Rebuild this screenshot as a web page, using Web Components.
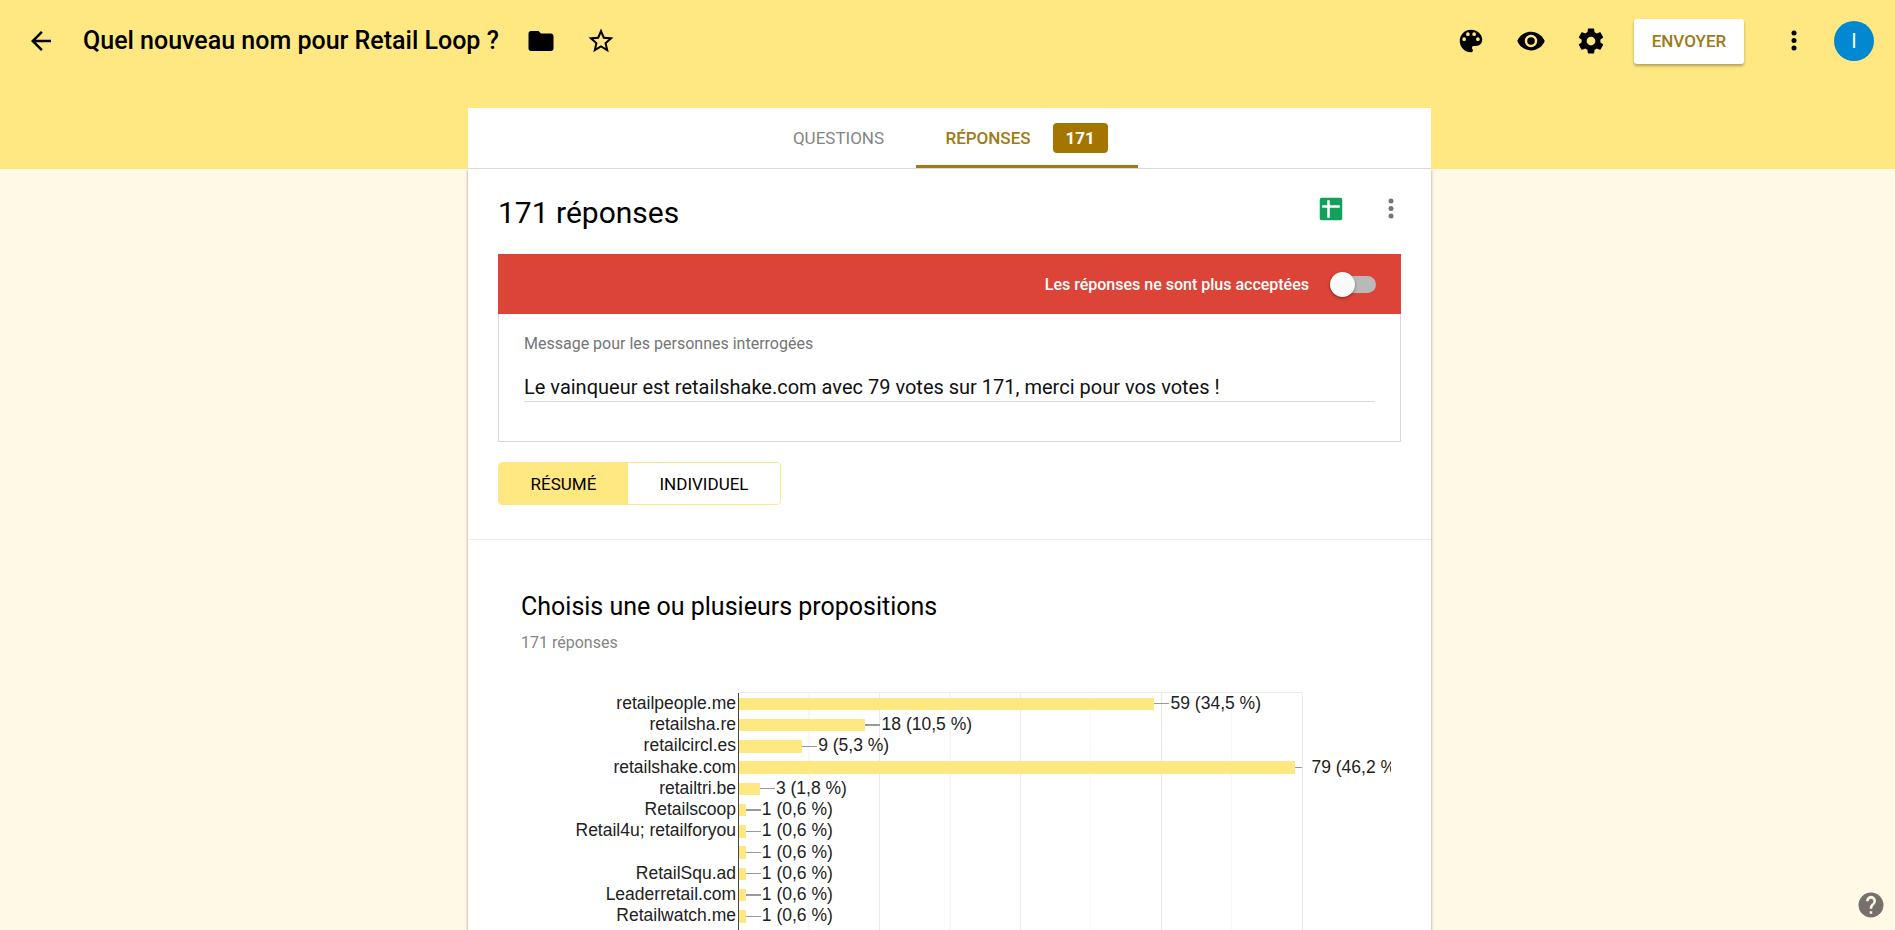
<!DOCTYPE html>
<html lang="fr">
<head>
<meta charset="utf-8">
<meta name="viewport" content="width=device-width, initial-scale=1">
<title>Quel nouveau nom pour Retail Loop ?</title>
<style>
  html, body { height: 100%; }
  body {
    margin: 0;
    font-family: Roboto, "Liberation Sans", sans-serif;
    color: #000;
    background: #fff9e5;
    --theme: #ffe782;
    --accent: #a47600;
    --accent-text: #a07a14;
    --line: #d9d9d9;
    --muted: #757575;
    --card-width: 963px;
  }
</style>
</head>
<body>
<forms-app></forms-app>

<template id="icon-button">
  <style>
    :host { display: block; flex: none; }
    button {
      display: grid; place-items: center; width: var(--button-size, 60px); height: var(--button-size, 60px);
      margin: 0; padding: 0; border: 0; background: none; color: inherit; cursor: pointer;
    }
    svg { display: block; width: 30px; height: 30px; fill: currentColor; }
  </style>
  <button type="button"><svg viewBox="0 0 24 24" aria-hidden="true"></svg></button>
</template>

<template id="top-bar">
  <style>
    :host { display: flex; align-items: center; height: 82px; padding: 0 21px 0 11px; box-sizing: border-box; }
    h1 { margin: 0 12px; font-size: 25px; line-height: 32px; font-weight: 500; white-space: nowrap; }
    .space { flex: 1; }
    .send {
      width: 110px; height: 45px; margin: 0 20px 0 13px; padding: 0; border: 0; border-radius: 3px;
      background: #fff; color: var(--accent-text); font: 500 17px/20px Roboto, sans-serif;
      box-shadow: 0 2px 3px rgba(0,0,0,.3); cursor: pointer;
    }
    .avatar {
      width: 40px; height: 40px; margin: 0 0 0 10px; padding: 0; border: 0; border-radius: 50%;
      background: #0288d1; color: #fff; font: 400 20px/40px Roboto, sans-serif; cursor: pointer;
    }
  </style>
  <icon-button icon="back" label="Retour"></icon-button>
  <h1>Quel nouveau nom pour Retail Loop ?</h1>
  <icon-button icon="folder" label="Dossier"></icon-button>
  <icon-button icon="star" label="Suivre"></icon-button>
  <span class="space"></span>
  <icon-button icon="palette" label="Palette"></icon-button>
  <icon-button icon="eye" label="Aperçu"></icon-button>
  <icon-button icon="gear" label="Paramètres"></icon-button>
  <button class="send" type="button">ENVOYER</button>
  <icon-button icon="more" label="Plus"></icon-button>
  <button class="avatar" type="button">I</button>
</template>

<template id="tab-strip">
  <style>
    :host {
      display: flex; justify-content: center; width: 100%; max-width: var(--card-width); height: 61px;
      box-sizing: border-box; background: #fff; border-bottom: 1px solid var(--line);
    }
    button {
      display: flex; align-items: center; justify-content: center; gap: 22px; min-width: 154px;
      margin: 0; padding: 3px 28px 0; border: 0; border-bottom: 3px solid transparent; background: none;
      color: #858585; font: 400 17px/20px Roboto, sans-serif; cursor: pointer;
    }
    button[aria-selected="true"] { min-width: 222px; color: var(--accent-text); border-color: var(--accent-text); font-weight: 500; }
    .count {
      width: 55px; border-radius: 4px; background: var(--accent); color: #fff;
      font-weight: 700; line-height: 30px;
    }
  </style>
  <button type="button" role="tab" aria-selected="false">QUESTIONS</button>
  <button type="button" role="tab" aria-selected="true">RÉPONSES<span class="count">171</span></button>
</template>

<template id="responses-panel">
  <style>
    :host { display: block; padding: 0 30px 34px; border-bottom: 1px solid #ebebeb; }
    header { display: flex; align-items: center; height: 85px; }
    h2 { flex: 1; margin: 0; padding-top: 2px; font-size: 30px; line-height: 36px; font-weight: 400; }
    .actions { display: flex; align-items: center; align-self: flex-start; height: 80px; margin-right: -20px; }
    .sheets { color: #12a05a; }
    .more { color: var(--muted); }
    .status {
      display: flex; align-items: center; justify-content: flex-end; gap: 21px; height: 60px;
      padding: 0 25px; background: #db4437; color: #fff; font-size: 16px; font-weight: 500;
    }
    .status input {
      appearance: none; display: flex; align-items: center; width: 46px; height: 17px; margin: 0;
      border-radius: 9px; background: linear-gradient(90deg, transparent 8px, #b9b9b9 8px); cursor: pointer;
    }
    .status input::before {
      content: ""; width: 25px; height: 25px; border-radius: 50%; background: #fafafa;
      box-shadow: 0 1px 3px rgba(0,0,0,.45);
    }
    .message { padding: 20px 25px 39px; border: 1px solid var(--line); border-top: 0; }
    .message label { display: block; color: var(--muted); font-size: 16px; line-height: 20px; }
    .message input {
      display: block; box-sizing: border-box; width: 100%; height: 30px; margin: 18px 0 0; padding: 0;
      border: 0; border-bottom: 1px solid var(--line); outline: 0; background: none; color: #111;
      font: 400 20px/28px Roboto, sans-serif;
    }
    .views { display: flex; width: 283px; height: 43px; margin-top: 20px; box-sizing: border-box; border: 1px solid var(--theme); border-radius: 4px; overflow: hidden; }
    .views button {
      flex: 1; margin: 0; padding: 0; border: 0; background: #fff; color: #000;
      font: 400 17px/20px Roboto, sans-serif; cursor: pointer;
    }
    .views button[aria-pressed="true"] { flex: 0 0 129px; background: var(--theme); }
  </style>
  <header>
    <h2>171 réponses</h2>
    <div class="actions">
      <icon-button class="sheets" icon="sheets" label="Créer une feuille de calcul"></icon-button>
      <icon-button class="more" icon="more" label="Plus"></icon-button>
    </div>
  </header>
  <div class="status">
    <label for="accepting">Les réponses ne sont plus acceptées</label>
    <input id="accepting" type="checkbox" role="switch">
  </div>
  <div class="message">
    <label for="message">Message pour les personnes interrogées</label>
    <input id="message" type="text" value="Le vainqueur est retailshake.com avec 79 votes sur 171, merci pour vos votes !">
  </div>
  <div class="views">
    <button type="button" aria-pressed="true">RÉSUMÉ</button>
    <button type="button" aria-pressed="false">INDIVIDUEL</button>
  </div>
</template>

<template id="question-summary">
  <style>
    :host { display: block; padding: 50px 40px 40px 53px; }
    h3 { margin: 0; font-size: 25px; line-height: 34px; font-weight: 400; }
    p { margin: 9px 0 27px; color: #858585; font-size: 16px; line-height: 20px; }
  </style>
  <h3><slot name="title"></slot></h3>
  <p><slot name="count"></slot></p>
  <slot></slot>
</template>

<template id="bar-chart">
  <style>
    :host { display: block; }
    svg { display: block; width: 100%; height: auto; overflow: hidden; }
    text { font: 14px "Liberation Sans", Arial, sans-serif; fill: #222; }
    .name { text-anchor: end; }
    rect, line { shape-rendering: crispEdges; }
    .bar { fill: var(--theme); }
    .major { stroke: #ebebeb; }
    .minor { stroke: #f7f7f7; }
    .axis { stroke: #444; }
    .stem { stroke: #999; }
  </style>
  <svg role="img" aria-label="Nombre de votes par proposition"></svg>
</template>

<template id="forms-app">
  <style>
    :host { display: flex; flex-direction: column; height: 100%; overflow: hidden; }
    .head { flex: none; background: var(--theme); }
    .tabs, main { display: flex; justify-content: center; align-items: flex-start; padding-left: 4px; }
    .tabs { padding-top: 26px; }
    main { flex: 1; min-height: 0; overflow-y: auto; scrollbar-width: none; }
    .card { width: 100%; max-width: var(--card-width); background: #fff; box-shadow: 0 1px 3px rgba(0,0,0,.4); }
    .help { --button-size: 30px; position: fixed; right: 9px; bottom: 10px; color: #75716a; }
  </style>
  <div class="head">
    <top-bar></top-bar>
    <div class="tabs"><tab-strip role="tablist"></tab-strip></div>
  </div>
  <main>
    <div class="card">
      <responses-panel></responses-panel>
      <question-summary>
        <span slot="title">Choisis une ou plusieurs propositions</span>
        <span slot="count">171 réponses</span>
        <bar-chart></bar-chart>
      </question-summary>
    </div>
  </main>
  <icon-button class="help" icon="help" label="Aide"></icon-button>
</template>

<script>
  const ICONS = {
    back: '<path d="M20 11H7.83l5.59-5.59L12 4l-8 8 8 8 1.41-1.41L7.83 13H20z"/>',
    folder: '<path d="M10 4H4c-1.1 0-1.99.9-1.99 2L2 18c0 1.1.9 2 2 2h16c1.1 0 2-.9 2-2V8c0-1.1-.9-2-2-2h-8z"/>',
    star: '<path d="M22 9.24l-7.19-.62L12 2 9.19 8.63 2 9.24l5.46 4.73L5.82 21 12 17.27 18.18 21l-1.63-7.03zM12 15.4l-3.76 2.27 1-4.28-3.32-2.88 4.38-.38L12 6.1l1.71 4.04 4.38.38-3.32 2.88 1 4.28z"/>',
    palette: '<path d="M12 3a9 9 0 0 0 0 18c.83 0 1.5-.67 1.5-1.5 0-.39-.15-.74-.39-1.01-.23-.26-.38-.61-.38-.99 0-.83.67-1.5 1.5-1.5H16c2.76 0 5-2.24 5-5 0-4.42-4.03-8-9-8zm-5.5 9a1.5 1.5 0 1 1 0-3 1.5 1.5 0 0 1 0 3zm3-4a1.5 1.5 0 1 1 0-3 1.5 1.5 0 0 1 0 3zm5 0a1.5 1.5 0 1 1 0-3 1.5 1.5 0 0 1 0 3zm3 4a1.5 1.5 0 1 1 0-3 1.5 1.5 0 0 1 0 3z"/>',
    eye: '<path d="M12 4.5C7 4.5 2.73 7.61 1 12c1.73 4.39 6 7.5 11 7.5s9.27-3.11 11-7.5c-1.73-4.39-6-7.5-11-7.5zM12 17a5 5 0 1 1 0-10 5 5 0 0 1 0 10zm0-8a3 3 0 1 0 0 6 3 3 0 0 0 0-6z"/>',
    gear: '<path d="M19.43 12.98c.04-.32.07-.64.07-.98s-.03-.66-.07-.98l2.11-1.65c.19-.15.24-.42.12-.64l-2-3.46c-.12-.22-.39-.3-.61-.22l-2.49 1c-.52-.4-1.08-.73-1.69-.98l-.38-2.65A.488.488 0 0 0 14 2h-4c-.25 0-.46.18-.49.42l-.38 2.65c-.61.25-1.17.59-1.69.98l-2.49-1c-.23-.09-.49 0-.61.22l-2 3.46c-.13.22-.07.49.12.64l2.11 1.65c-.04.32-.07.65-.07.98s.03.66.07.98l-2.11 1.65c-.19.15-.24.42-.12.64l2 3.46c.12.22.39.3.61.22l2.49-1c.52.4 1.08.73 1.69.98l.38 2.65c.03.24.24.42.49.42h4c.25 0 .46-.18.49-.42l.38-2.65c.61-.25 1.17-.59 1.69-.98l2.49 1c.23.09.49 0 .61-.22l2-3.46c.12-.22.07-.49-.12-.64zM12 15.5a3.5 3.5 0 1 1 0-7 3.5 3.5 0 0 1 0 7z"/>',
    more: '<circle cx="12" cy="5.5" r="2"/><circle cx="12" cy="11.5" r="2"/><circle cx="12" cy="17.5" r="2"/>',
    sheets: '<rect x="3" y="3" width="18" height="18" rx="1.6"/><path fill="#fff" d="M9 5h2v4h8v2h-8v8H9v-8H5V9h4z"/>',
    help: '<path d="M12 2a10 10 0 1 0 0 20 10 10 0 0 0 0-20zm1 17h-2v-2h2zm2.07-7.75l-.9.92C13.45 12.9 13 13.5 13 15h-2v-.5c0-1.1.45-2.1 1.17-2.83l1.24-1.26A2 2 0 1 0 10 9H8a4 4 0 1 1 7.07 2.25z"/>'
  };

  class ShadowElement extends HTMLElement {
    constructor() {
      super();
      const template = document.getElementById(this.localName);
      this.attachShadow({ mode: 'open' }).append(template.content.cloneNode(true));
    }
  }

  class IconButton extends ShadowElement {
    connectedCallback() {
      this.shadowRoot.querySelector('svg').innerHTML = ICONS[this.getAttribute('icon')];
      this.shadowRoot.querySelector('button').setAttribute('aria-label', this.getAttribute('label'));
    }
  }

  class BarChart extends ShadowElement {
    connectedCallback() {
      const votes = [
        ['retailpeople.me', 59, '34,5'], ['retailsha.re', 18, '10,5'], ['retailcircl.es', 9, '5,3'],
        ['retailshake.com', 79, '46,2'], ['retailtri.be', 3, '1,8'], ['Retailscoop', 1, '0,6'],
        ['Retail4u; retailforyou', 1, '0,6'], ['', 1, '0,6'], ['RetailSqu.ad', 1, '0,6'],
        ['Leaderretail.com', 1, '0,6'], ['Retailwatch.me', 1, '0,6'], ['', 1, '0,6']
      ];
      const left = 174, right = 625, top = 10, pitch = 17, max = 80;
      const bottom = top + votes.length * pitch + 8;
      const x = v => left + (right - left) * v / max;
      let out = `<line class="major" x1="${left}" x2="${right}" y1="${top}" y2="${top}"/>`;
      for (let v = 10; v <= max; v += 10) {
        const kind = v % 20 ? 'minor' : 'major';
        out += `<line class="${kind}" x1="${x(v)}" x2="${x(v)}" y1="${top}" y2="${bottom}"/>`;
      }
      votes.forEach(([name, n, share], i) => {
        const y = top + i * pitch, end = x(n), mid = y + 9;
        out += `<rect class="bar" x="${left}" y="${y + 4}" width="${end - left}" height="10"/>
          <line class="stem" x1="${end}" x2="${Math.min(end + 12, right)}" y1="${mid}" y2="${mid}"/>
          <text class="name" x="${left - 2}" y="${y + 13}">${name}</text>
          <text x="${end + 13}" y="${y + 13}">${n} (${share} %)</text>`;
      });
      out += `<line class="axis" x1="${left}" x2="${left}" y1="${top}" y2="${bottom}"/>`;
      const svg = this.shadowRoot.querySelector('svg');
      svg.setAttribute('viewBox', `0 0 696 ${bottom}`);
      svg.innerHTML = out;
    }
  }

  customElements.define('icon-button', IconButton);
  customElements.define('bar-chart', BarChart);
  for (const name of ['top-bar', 'tab-strip', 'responses-panel', 'question-summary', 'forms-app']) {
    customElements.define(name, class extends ShadowElement {});
  }
</script>
</body>
</html>
